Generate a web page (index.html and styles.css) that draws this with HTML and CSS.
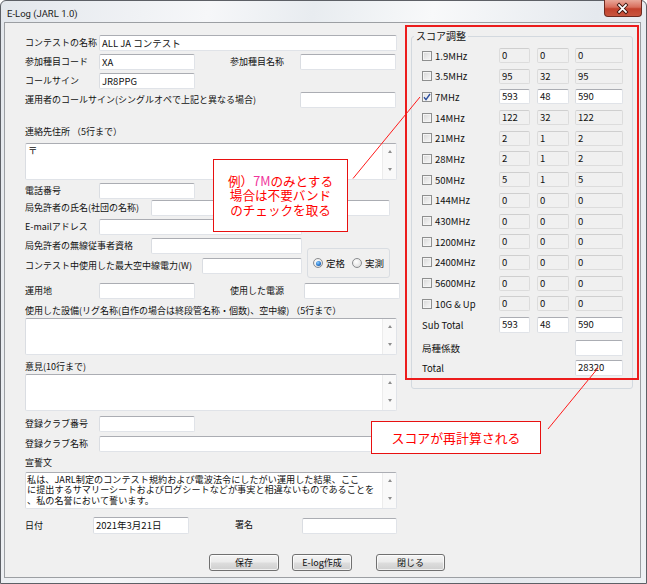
FILE: index.html
```html
<!DOCTYPE html>
<html lang="ja">
<head>
<meta charset="utf-8">
<title>E-Log (JARL 1.0)</title>
<link rel="stylesheet" href="styles.css">
</head>
<body>
<div class="window">
  <div class="titlebar">
    <span class="title">E-Log (JARL 1.0)</span>
    <span class="close">
      <svg width="38" height="17" viewBox="0 0 38 17"><path d="M15.5 5 L22.5 12 M22.5 5 L15.5 12" stroke="#3b1610" stroke-width="3.6" stroke-linecap="square" fill="none"/><path d="M15.5 5 L22.5 12 M22.5 5 L15.5 12" stroke="#ffffff" stroke-width="1.8" stroke-linecap="square" fill="none"/></svg>
    </span>
  </div>
  <div class="client">
    <div class="form">
      <div class="row"><span class="lbl w74">コンテストの名称</span><div class="tb w298">ALL JA コンテスト</div></div>
      <div class="row g3"><span class="lbl w74">参加種目コード</span><div class="tb w96">XA</div><span class="lbl gap35 w70">参加種目名称</span><div class="tb w96"></div></div>
      <div class="row g3"><span class="lbl w74">コールサイン</span><div class="tb w96">JR8PPG</div></div>
      <div class="row g3"><span class="lbl w275">運用者のコールサイン(シングルオペで上記と異なる場合)</span><div class="tb w96"></div></div>
      <div class="caption g18">連絡先住所 （5行まで）</div>
      <div class="memo g5"><div class="memo-text">〒</div><div class="vscroll"><i class="up"></i><i class="down"></i></div></div>
      <div class="row g3"><span class="lbl w74">電話番号</span><div class="tb w96"></div></div>
      <div class="row g1"><span class="lbl w126">局免許者の氏名(社団の名称)</span><div class="tb w239"></div></div>
      <div class="row g3"><span class="lbl w74">E-mailアドレス</span><div class="tb w203"></div></div>
      <div class="block g3">
        <div class="stack">
          <div class="row"><span class="lbl w126">局免許者の無線従事者資格</span><div class="tb w151"></div></div>
          <div class="row g4"><span class="lbl w177">コンテスト中使用した最大空中線電力(W)</span><div class="tb w100"></div></div>
        </div>
        <div class="radiobox">
          <span class="radio on"></span><span class="rlbl">定格</span>
          <span class="radio second"></span><span class="rlbl">実測</span>
        </div>
      </div>
      <div class="row g9"><span class="lbl w74">運用地</span><div class="tb w96"></div><span class="lbl gap35 w74">使用した電源</span><div class="tb w96"></div></div>
      <div class="caption g6">使用した設備(リグ名称(自作の場合は終段管名称・個数)、空中線) （5行まで）</div>
      <div class="memo g1"><div class="memo-text"></div><div class="vscroll"><i class="up"></i><i class="down"></i></div></div>
      <div class="caption g6">意見(10行まで)</div>
      <div class="memo g1"><div class="memo-text"></div><div class="vscroll"><i class="up"></i><i class="down"></i></div></div>
      <div class="row g5"><span class="lbl w74">登録クラブ番号</span><div class="tb w96"></div></div>
      <div class="row g4"><span class="lbl w74">登録クラブ名称</span><div class="tb w298"></div></div>
      <div class="caption g5">宣誓文</div>
      <div class="memo g3"><div class="memo-text decl">私は、JARL制定のコンテスト規約および電波法令にしたがい運用した結果、ここ<br>に提出するサマリーシートおよびログシートなどが事実と相違ないものであることを<br>、私の名誉において誓います。</div><div class="vscroll"><i class="up"></i><i class="down"></i></div></div>
      <div class="row h17 g8"><span class="lbl w68">日付</span><div class="tb w96 h17">2021年3月21日</div><span class="lbl gap46 w67 up2">署名</span><div class="tb w95"></div></div>
      <div class="buttons g20">
        <div class="btn b-save">保存</div>
        <div class="btn b-elog">E-log作成</div>
        <div class="btn b-close">閉じる</div>
      </div>
    </div>
    <fieldset class="score">
      <legend>スコア調整</legend>
      <div class="bands">
        <div class="band"><span class="cell"><span class="chk"></span>1.9MHz</span><div class="tb dis s1">0</div><div class="tb dis s2">0</div><div class="tb dis s3">0</div></div>
        <div class="band"><span class="cell"><span class="chk"></span>3.5MHz</span><div class="tb dis s1">95</div><div class="tb dis s2">32</div><div class="tb dis s3">95</div></div>
        <div class="band"><span class="cell"><span class="chk on"><svg width="8" height="8" viewBox="0 0 8 8"><path d="M1 4.2 L3 6.6 L7 1" stroke="#2c4f9e" stroke-width="1.4" fill="none"/></svg></span>7MHz</span><div class="tb s1">593</div><div class="tb s2">48</div><div class="tb s3">590</div></div>
        <div class="band"><span class="cell"><span class="chk"></span>14MHz</span><div class="tb dis s1">122</div><div class="tb dis s2">32</div><div class="tb dis s3">122</div></div>
        <div class="band"><span class="cell"><span class="chk"></span>21MHz</span><div class="tb dis s1">2</div><div class="tb dis s2">1</div><div class="tb dis s3">2</div></div>
        <div class="band"><span class="cell"><span class="chk"></span>28MHz</span><div class="tb dis s1">2</div><div class="tb dis s2">1</div><div class="tb dis s3">2</div></div>
        <div class="band"><span class="cell"><span class="chk"></span>50MHz</span><div class="tb dis s1">5</div><div class="tb dis s2">1</div><div class="tb dis s3">5</div></div>
        <div class="band"><span class="cell"><span class="chk"></span>144MHz</span><div class="tb dis s1">0</div><div class="tb dis s2">0</div><div class="tb dis s3">0</div></div>
        <div class="band"><span class="cell"><span class="chk"></span>430MHz</span><div class="tb dis s1">0</div><div class="tb dis s2">0</div><div class="tb dis s3">0</div></div>
        <div class="band"><span class="cell"><span class="chk"></span>1200MHz</span><div class="tb dis s1">0</div><div class="tb dis s2">0</div><div class="tb dis s3">0</div></div>
        <div class="band"><span class="cell"><span class="chk"></span>2400MHz</span><div class="tb dis s1">0</div><div class="tb dis s2">0</div><div class="tb dis s3">0</div></div>
        <div class="band"><span class="cell"><span class="chk"></span>5600MHz</span><div class="tb dis s1">0</div><div class="tb dis s2">0</div><div class="tb dis s3">0</div></div>
        <div class="band"><span class="cell"><span class="chk"></span>10G &amp; Up</span><div class="tb dis s1">0</div><div class="tb dis s2">0</div><div class="tb dis s3">0</div></div>
        <div class="band tall sub"><span class="cell">Sub Total</span><div class="tb s1">593</div><div class="tb s2">48</div><div class="tb s3">590</div></div>
        <div class="band tall coef"><span class="cell">局種係数</span><span class="skip"></span><div class="tb s3"></div></div>
        <div class="band tall"><span class="cell">Total</span><span class="skip"></span><div class="tb s3">28320</div></div>
      </div>
    </fieldset>
  </div>

  <div class="redframe"></div>
  <div class="callout note1"><span class="ctext">例）<span class="hl">7M</span>のみとする<br>場合は不要バンド<br>のチェックを取る</span></div>
  <div class="callout note2"><span class="ctext">スコアが再計算される</span></div>
  <svg class="lines" width="647" height="584" viewBox="0 0 647 584">
    <line x1="353" y1="178.5" x2="420" y2="97" stroke="#ff1a1a" stroke-width="1"/>
    <line x1="548" y1="429" x2="598" y2="368" stroke="#ff1a1a" stroke-width="1"/>
  </svg>
</div>
</body>
</html>
```

FILE: styles.css
```css
* { box-sizing: border-box; }
html, body { margin: 0; padding: 0; }
body {
  width: 647px;
  height: 584px;
  overflow: hidden;
  background: #ffffff;
  font-family: "Noto Sans CJK JP", "Noto Sans", sans-serif;
  font-size: 9px;
  color: #111;
}

.window {
  position: relative;
  width: 647px;
  height: 584px;
  border: 1px solid #5d6066;
  border-radius: 6px 6px 0 0;
  padding: 0 5px 5px 3px;
  background: linear-gradient(100deg, #e3e7ec 0%, #f6f7f9 28%, #e8ecf0 42%, #f8f9fa 58%, #e5e9ee 80%, #eef1f4 100%);
  display: flex;
  flex-direction: column;
}

.titlebar {
  height: 21px;
  display: flex;
  align-items: flex-start;
  margin-right: -5px;
}
.title {
  font-family: Roboto, "Liberation Sans", sans-serif;
  font-size: 9.5px;
  line-height: 11px;
  padding: 7px 0 0 3px;
  color: #1b1b1b;
}
.close {
  margin-left: auto;
  margin-right: 4px;
  margin-top: -1px;
  width: 38px;
  height: 17px;
  border: 1px solid #6e2a20;
  border-top: none;
  border-radius: 0 0 4px 4px;
  background: linear-gradient(#e9a89a 0%, #d86e5c 45%, #c2412c 55%, #c8553e 100%);
  display: flex;
  overflow: hidden;
}
.close svg { display: block; margin-left: -1px; }

.client {
  height: 556px;
  border: 1px solid #9c9fa3;
  background: #f0f0f0;
  display: flex;
  align-items: flex-start;
  padding: 7px 0 0 20px;
}

.form {
  width: 376px;
  flex: none;
  padding-top: 5px;
  display: flex;
  flex-direction: column;
}

.row { display: flex; align-items: center; height: 16px; flex: none; }
.row.h17 { height: 17px; }
.lbl { white-space: nowrap; flex: none; line-height: 12px; }
.caption { height: 12px; line-height: 12px; white-space: nowrap; flex: none; }

.g1 { margin-top: 1px; }
.g3 { margin-top: 3px; }
.g4 { margin-top: 4px; }
.g5 { margin-top: 5px; }
.g6 { margin-top: 6px; }
.g8 { margin-top: 8px; }
.g9 { margin-top: 9px; }
.g18 { margin-top: 18px; }
.g20 { margin-top: 20px; }

.w67 { width: 67px; }
.w68 { width: 68px; }
.w70 { width: 70px; }
.w74 { width: 74px; }
.w95 { width: 95px; }
.w96 { width: 96px; }
.w100 { width: 100px; }
.w126 { width: 126px; }
.w151 { width: 151px; }
.w177 { width: 177px; }
.w203 { width: 203px; }
.w239 { width: 239px; }
.w275 { width: 275px; }
.w298 { width: 298px; }
.gap35 { margin-left: 35px; }
.gap46 { margin-left: 46px; }
.up2 { position: relative; top: -1px; }

.tb {
  height: 16px;
  flex: none;
  background: #ffffff;
  border: 1px solid #e0e3e8;
  border-top-color: #abadb3;
  border-left-color: #dadde2;
  border-radius: 2px;
  padding: 0 2px;
  font-size: 9.5px;
  line-height: 14px;
  white-space: nowrap;
  overflow: hidden;
  color: #111;
}
.tb.h17 { height: 17px; line-height: 15px; }
.tb.dis {
  background: #f0f0f0;
  border-color: #dcdcdc;
  border-top-color: #cfcfcf;
}

.memo {
  height: 37px;
  width: 372px;
  flex: none;
  display: flex;
  background: #ffffff;
  border: 1px solid #e0e3e8;
  border-top-color: #abadb3;
  border-left-color: #dadde2;
  border-radius: 2px;
}
.memo-text {
  flex: 1;
  min-width: 0;
  padding: 1px 2px;
  font-size: 9.5px;
  line-height: 11px;
  white-space: nowrap;
  overflow: hidden;
}
.memo-text.decl {
  padding: 1px 0 0 1px;
  font-size: 9.1px;
  line-height: 10.3px;
  letter-spacing: 0.05px;
}
.vscroll {
  width: 14px;
  flex: none;
  background: #f9f9f9;
  border-left: 1px solid #ececec;
  display: flex;
  flex-direction: column;
  justify-content: space-between;
  align-items: center;
  padding: 6px 0 8px;
}
.vscroll i {
  display: block;
  width: 0;
  height: 0;
  border-left: 2.5px solid transparent;
  border-right: 2.5px solid transparent;
}
.vscroll .up { border-bottom: 3px solid #8d8d8d; }
.vscroll .down { border-top: 3px solid #8d8d8d; }

.block { display: flex; align-items: flex-start; height: 36px; flex: none; }
.stack { display: flex; flex-direction: column; }
.radiobox {
  margin: 10px 0 0 5px;
  width: 83px;
  height: 30px;
  flex: none;
  border: 1px solid #d9dde2;
  border-radius: 3px;
  display: flex;
  align-items: center;
  padding: 0 0 0 5px;
}
.radio {
  width: 10px;
  height: 10px;
  flex: none;
  border-radius: 50%;
  border: 1px solid #8a8c8f;
  background: radial-gradient(circle at 40% 35%, #ffffff 0%, #e9e9e9 55%, #cfcfcf 100%);
  display: flex;
  align-items: center;
  justify-content: center;
}
.radio.on::after {
  content: "";
  width: 5px;
  height: 5px;
  border-radius: 50%;
  background: radial-gradient(circle at 40% 35%, #8fd0ff 0%, #2a7ad0 55%, #0d3f86 100%);
}
.radio.second { margin-left: 7px; }
.rlbl { margin-left: 3px; font-size: 9.5px; line-height: 12px; }

.buttons { display: flex; height: 17px; flex: none; }
.btn {
  flex: none;
  height: 17px;
  border: 1px solid #707070;
  border-radius: 3px;
  background: linear-gradient(#f4f4f4 0%, #ebebeb 48%, #dddddd 52%, #cfcfcf 100%);
  display: flex;
  align-items: center;
  justify-content: center;
  font-size: 9px;
  line-height: 12px;
  box-shadow: inset 0 0 0 1px rgba(255,255,255,0.7);
}
.b-save { width: 70px; margin-left: 184px; }
.b-elog { width: 60px; margin-left: 13px; }
.b-close { width: 69px; margin-left: 24px; }

/* score group */
.score {
  margin: 0 0 0 10px;
  padding: 0;
  width: 222px;
  height: 359px;
  min-width: 0;
  flex: none;
  border: 1px solid #d3d9df;
  border-radius: 3px;
}
.score legend {
  margin-left: 2px;
  padding: 0 2px;
  font-size: 10px;
  line-height: 12px;
}
.bands { padding: 6px 0 0 10px; display: flex; flex-direction: column; }
.band {
  display: flex;
  align-items: center;
  height: 15px;
  margin-bottom: 5.7px;
  flex: none;
}
.band.tall { height: 16px; }
.band.sub { margin-bottom: 7px; }
.band.coef { margin-bottom: 4px; }
.cell {
  width: 77px;
  flex: none;
  display: flex;
  align-items: center;
  font-size: 9.5px;
  line-height: 12px;
  white-space: nowrap;
}
.chk {
  width: 10px;
  height: 10px;
  flex: none;
  margin-right: 3px;
  border: 1px solid #8e8f8f;
  background: linear-gradient(135deg, #d6d6d6 0%, #ececec 60%, #f6f6f6 100%);
  box-shadow: inset 0 0 0 1px #f4f4f4;
  display: flex;
  align-items: center;
  justify-content: center;
}
.chk.on { background: linear-gradient(135deg, #e4e4e4 0%, #f8f8f8 100%); }
.chk svg { display: block; }
.band .tb { height: 15px; line-height: 12px; padding: 0 2px; font-size: 9.5px; }
.band.tall .tb { height: 16px; line-height: 13px; }
.s1 { width: 31px; margin-right: 7px; }
.s2 { width: 32px; margin-right: 6px; }
.s3 { width: 48px; }
.skip { width: 76px; flex: none; }

/* annotations */
.redframe {
  position: absolute;
  left: 404px;
  top: 24px;
  width: 234px;
  height: 355px;
  border: 2px solid #ec1c1c;
  pointer-events: none;
}
.callout {
  position: absolute;
  background: #ffffff;
  border: 1px solid #e81010;
  color: #ff0000;
  font-size: 12.6px;
  text-align: center;
  display: flex;
  align-items: center;
  justify-content: center;
  white-space: nowrap;
}
.ctext { display: block; }
.note1 {
  left: 212px;
  top: 158px;
  width: 135px;
  height: 73px;
  line-height: 14.2px;
}
.note1 .hl { color: #f0359c; }
.note2 {
  left: 370px;
  top: 420px;
  width: 170px;
  height: 33px;
  font-size: 12.9px;
  line-height: 16px;
}
.lines {
  position: absolute;
  left: -1px;
  top: -1px;
  pointer-events: none;
}
```
